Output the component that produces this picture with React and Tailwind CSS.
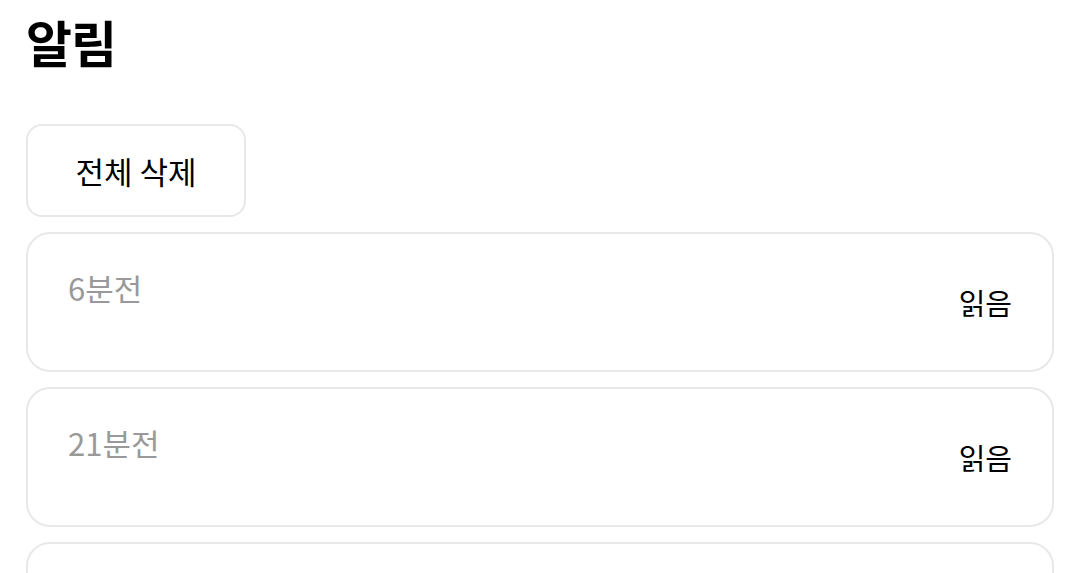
import React from 'react';

const notifications = [
  { id: 1, time: '6분전', status: '읽음' },
  { id: 2, time: '21분전', status: '읽음' },
];

const App = () => {
  return (
    <div
      className="h-screen overflow-hidden bg-white px-[26px] pt-[11px] text-black"
      style={{ fontFamily: '"Noto Sans CJK KR", "Noto Sans", sans-serif' }}
    >
      {/* Header */}
      <h1 className="text-[50px] font-bold leading-[60px] tracking-[-1px]">알림</h1>

      <div className="mt-[53px] flex flex-col gap-[15px]">
        <button
          type="button"
          className="flex h-[93px] w-[220px] items-center justify-center rounded-[16px] border-2 border-[#e8e8e8] bg-white text-[31px] leading-none"
        >
          전체 삭제
        </button>

        {notifications.map((n) => (
          <div
            key={n.id}
            className="flex h-[140px] shrink-0 items-center justify-between rounded-[24px] border-2 border-[#e8e8e8] bg-white pl-[40px] pr-[40px]"
          >
            <div className="self-start pt-[34px] text-[31px] leading-[40px] text-[#999999]">{n.time}</div>
            <div className="text-[29px] leading-[40px]">{n.status}</div>
          </div>
        ))}

        {/* next card, below the fold */}
        <div className="h-[140px] shrink-0 rounded-[24px] border-2 border-[#e8e8e8] bg-white" />
      </div>
    </div>
  );
};

export default App;
